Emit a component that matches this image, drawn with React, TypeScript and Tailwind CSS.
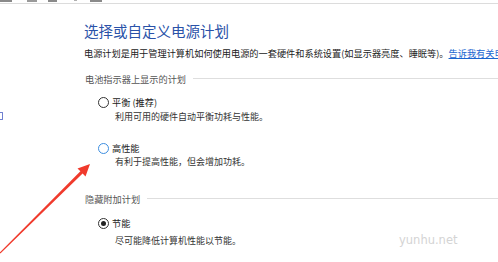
const FONT = "font-['Microsoft_YaHei','Noto_Sans_CJK_SC',sans-serif]";

function Radio({ state }: { state: "off" | "hover" | "on" }) {
  const border =
    state === "hover" ? "border-[#3d8ee0]" : "border-[#333333]";
  return (
    <span
      className={`flex h-[11px] w-[11px] shrink-0 items-center justify-center rounded-full border ${border} bg-white`}
    >
      {state === "on" && <span className="h-[5px] w-[5px] rounded-full bg-[#222222]" />}
    </span>
  );
}

function SectionHeader({ label, mt }: { label: string; mt: string }) {
  return (
    <div className={`flex items-center ${mt}`}>
      <span className="pl-[1px] text-[9.2px] leading-[12px] text-[#555555] whitespace-nowrap">
        {label}
      </span>
      <span className="ml-[7px] -mt-[2px] h-px flex-1 bg-[#dedede]" />
    </div>
  );
}

function Plan({
  label,
  desc,
  state,
  mt,
  descMt,
}: {
  label: string;
  desc: string;
  state: "off" | "hover" | "on";
  mt: string;
  descMt: string;
}) {
  return (
    <div className={mt}>
      <div className="flex h-[12px] items-center pl-[14px]">
        <Radio state={state} />
        <span className="ml-[3px] text-[9.2px] leading-[12px] text-[#222222] whitespace-nowrap">
          {label}
        </span>
      </div>
      <p className={`${descMt} pl-[31px] text-[9px] leading-[12px] text-[#333333] whitespace-nowrap`}>
        {desc}
      </p>
    </div>
  );
}

export default function App() {
  return (
    <div className={`relative h-[262px] w-[498px] overflow-hidden bg-white ${FONT}`}>
      {/* bottom edge of the toolbar above */}
      <div className="flex h-[3px] items-start">
        <span className="h-[2px] w-[12px] bg-[#8a8a8a]" />
        <span className="ml-[15px] h-[2px] w-[10px] bg-[#9a9a9a]" />
        <span className="ml-[11px] h-[2px] w-[9px] bg-[#8a8a8a]" />
        <span className="ml-[17px] h-[1px] w-[3px] bg-[#b0b0b0]" />
        <span className="ml-[13px] h-[2px] w-[12px] bg-[#8a8a8a]" />
      </div>
      <div className="h-px w-full bg-[#dcdcdc]" />

      <div className="flex">
        {/* clipped left pane */}
        <div className="w-[4px] shrink-0 overflow-hidden">
          <div className="mt-[108px] h-[8px] w-[3px] rounded-r-[1px] border-y border-r border-[#6f7fd0]" />
        </div>

        <div className="min-w-0 flex-1 pl-[80px]">
          <h1 className="mt-[19px] text-[14.5px] leading-[16px] text-[#2a52a8] whitespace-nowrap">
            选择或自定义电源计划
          </h1>
          <p className="mt-[8px] text-[9.2px] leading-[12px] text-[#222222] whitespace-nowrap">
            电源计划是用于管理计算机如何使用电源的一套硬件和系统设置(如显示器亮度、睡眠等)。
            <span className="text-[#1a66d0] underline">告诉我有关电源计划的更多信息</span>
          </p>

          <SectionHeader label="电池指示器上显示的计划" mt="mt-[14px]" />
          <Plan
            label="平衡 (推荐)"
            desc="利用可用的硬件自动平衡功耗与性能。"
            state="off"
            mt="mt-[11px]"
            descMt="mt-[3px]"
          />
          <Plan
            label="高性能"
            desc="有利于提高性能，但会增加功耗。"
            state="hover"
            mt="mt-[19px]"
            descMt="mt-[2px]"
          />

          <SectionHeader label="隐藏附加计划" mt="mt-[25px]" />
          <Plan
            label="节能"
            desc="尽可能降低计算机性能以节能。"
            state="on"
            mt="mt-[12px]"
            descMt="mt-[6px]"
          />
        </div>
      </div>

      {/* annotation arrow */}
      <svg
        className="pointer-events-none absolute left-0 top-0"
        width="498"
        height="262"
        viewBox="0 0 498 262"
      >
        <polygon
          points="90,164 85.5,176.5 82.6,173.6 0.4,253.4 -0.4,252.6 80.4,171.3 77.5,168.5"
          fill="#f03a2c"
        />
      </svg>

      {/* watermark */}
      <span className="pointer-events-none absolute left-[399px] top-[233px] font-['DejaVu_Sans',sans-serif] text-[11.5px] leading-[14px] text-[#d4d4d4]">
        yunhu.net
      </span>
    </div>
  );
}
